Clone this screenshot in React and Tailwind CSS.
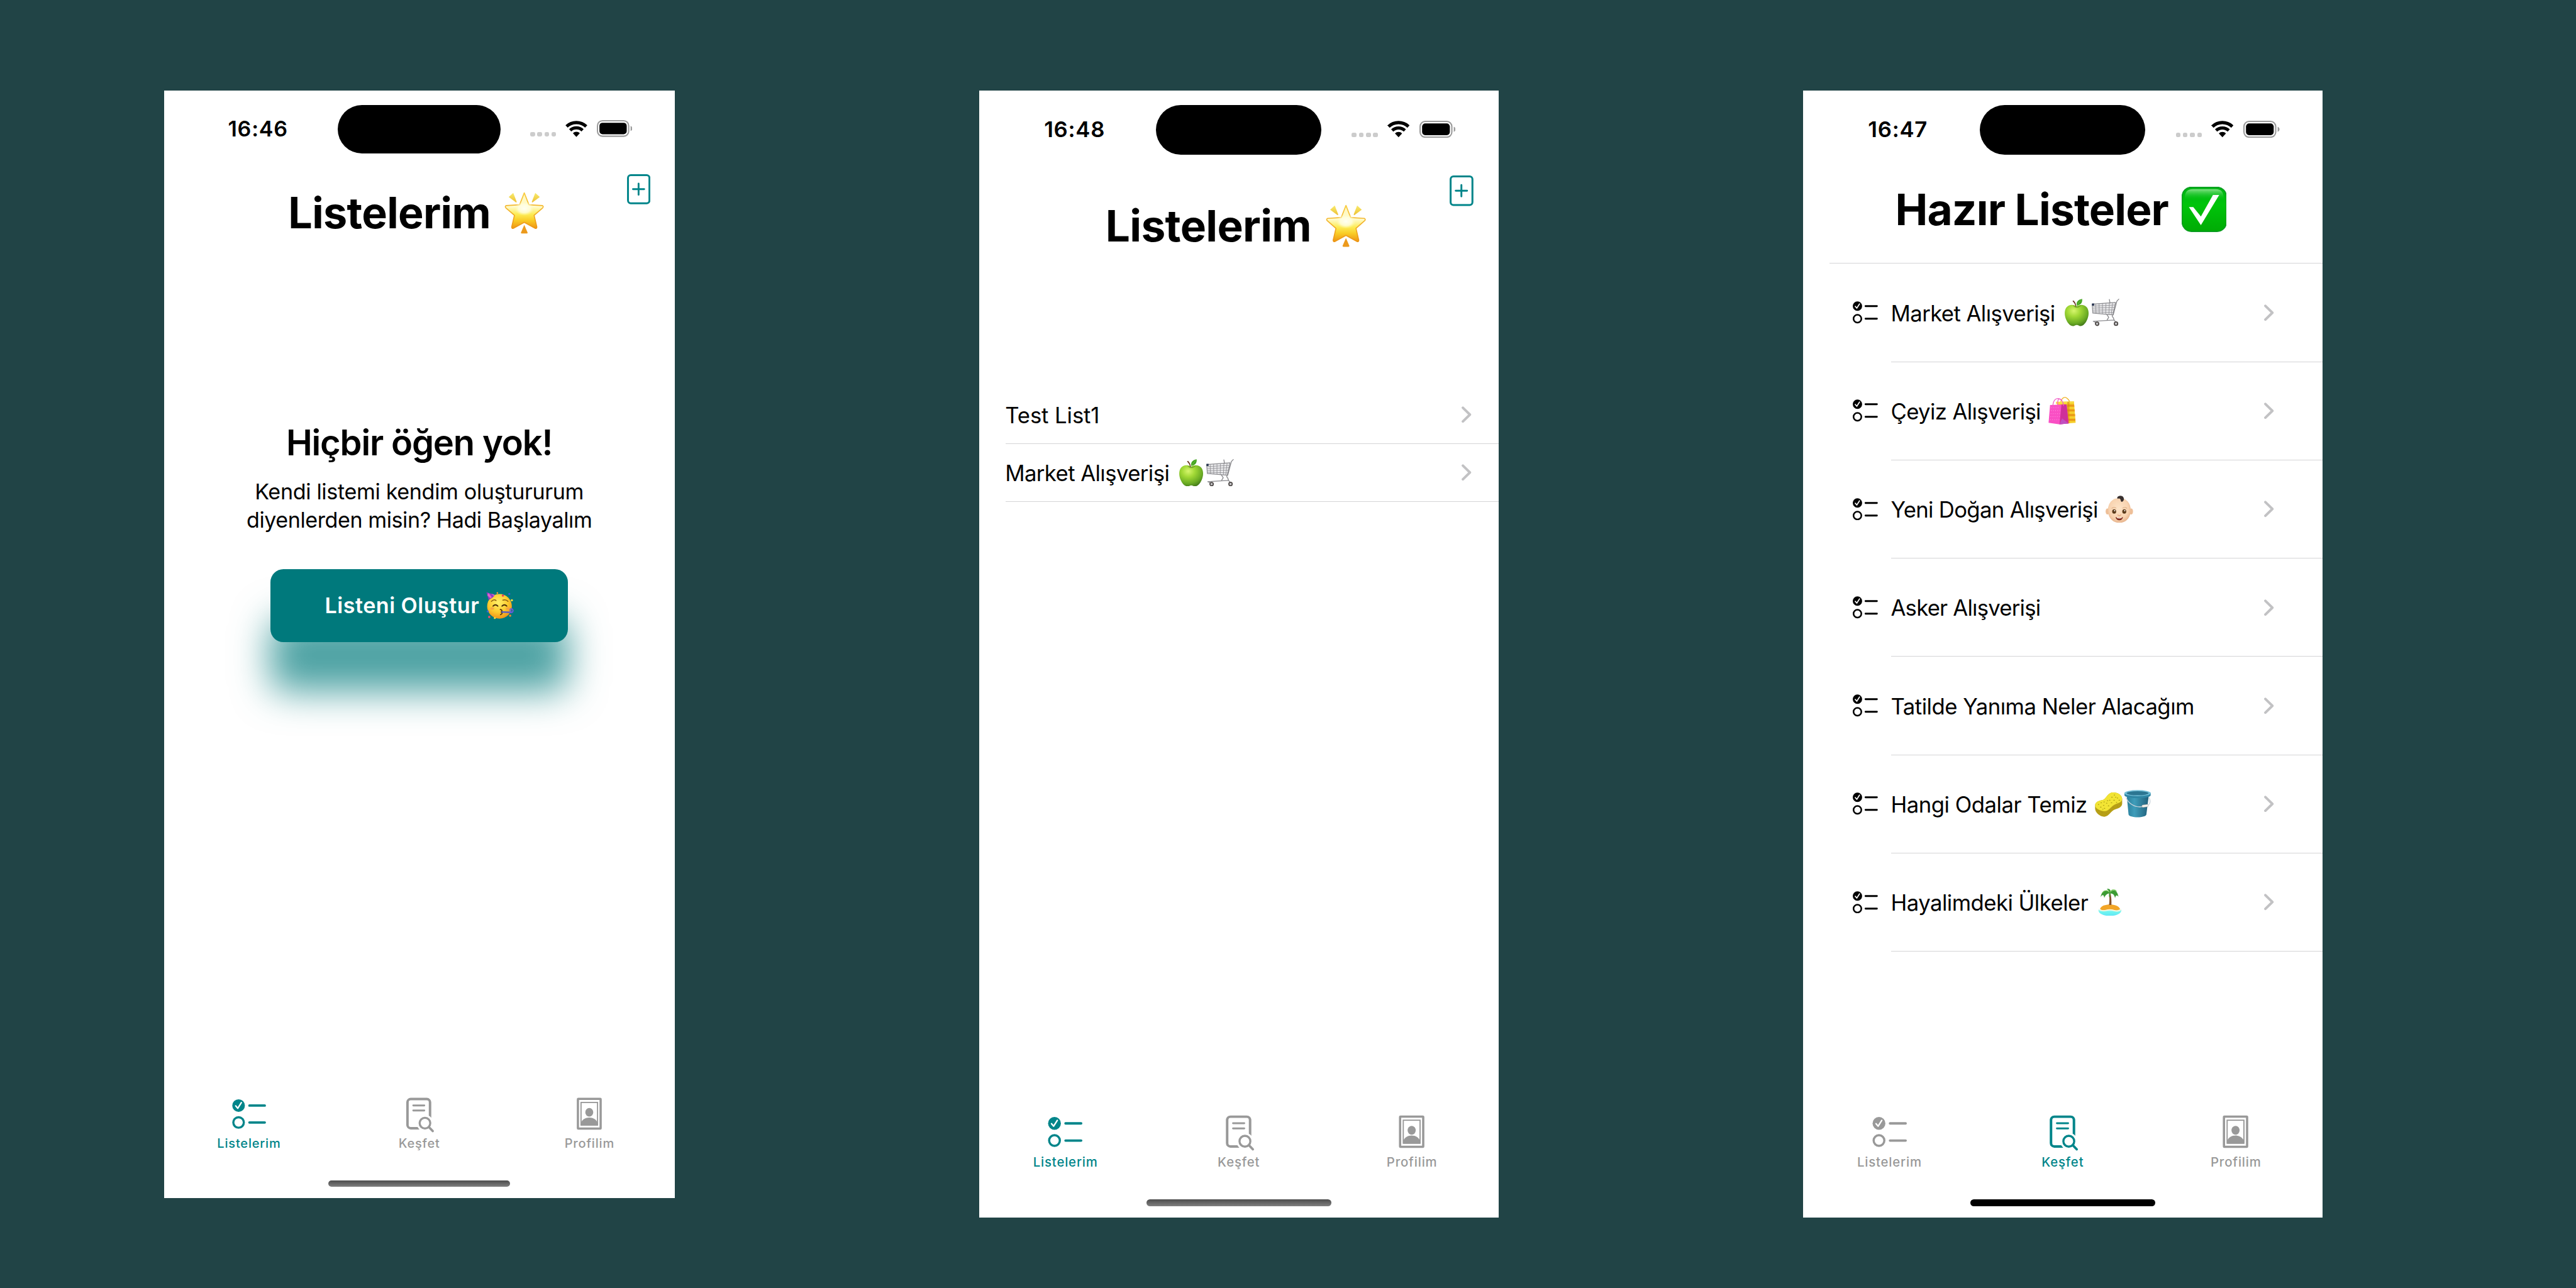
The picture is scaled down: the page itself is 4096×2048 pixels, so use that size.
import React from "react";

const TEAL = "text-[#00858A]";
const GRAY = "text-[#999999]";

/* ---------- status bar ---------- */

function Wifi() {
  return (
    <svg className="w-[16.9px] h-[12.6px]" viewBox="0 0 16.9 12.6" fill="none">
      <clipPath id="wifi-cone">
        <path d="M8.45 12.5L-3.2 0V-2H20.1V0Z" />
      </clipPath>
      <g clipPath="url(#wifi-cone)" stroke="#000">
        <circle cx="8.45" cy="12.4" r="11" strokeWidth="2.5" />
        <circle cx="8.45" cy="12.4" r="6.95" strokeWidth="2.4" />
        <circle cx="8.45" cy="12.4" r="1.95" strokeWidth="3.9" />
      </g>
    </svg>
  );
}

function Battery() {
  return (
    <svg className="w-[27.4px] h-[12.9px]" viewBox="0 0 27.4 12.9" fill="none">
      <rect x="0.5" y="0.5" width="24" height="11.9" rx="3.8" stroke="#9b9b9b" />
      <rect x="2" y="2" width="21" height="8.9" rx="2.4" fill="#000" />
      <path d="M26 4.5C26.9 4.9 27.4 5.6 27.4 6.45S26.9 8 26 8.4Z" fill="#9b9b9b" />
    </svg>
  );
}

function StatusBar({ time }) {
  return (
    <div className="flex h-[59px] items-start">
      <div className="w-[133.9px] pl-[49.3px] pt-[18.3px] text-[16.5px] leading-[22px] font-semibold tracking-[0.36px]">
        {time}
      </div>
      <div className="mt-[11.1px] h-[37.2px] w-[125.2px] rounded-full bg-black" />
      <div className="ml-[22.9px] mt-[22.7px] flex h-[12.9px] items-end">
        <div className="flex gap-[1.9px] pb-[0.3px]">
          <div className="h-[3.4px] w-[3.5px] rounded-[1.2px] bg-[#cccccc]" />
          <div className="h-[3.4px] w-[3.5px] rounded-[1.2px] bg-[#cccccc]" />
          <div className="h-[3.4px] w-[3.5px] rounded-[1.2px] bg-[#cccccc]" />
          <div className="h-[3.4px] w-[3.5px] rounded-[1.2px] bg-[#cccccc]" />
        </div>
        <div className="ml-[7.1px]">
          <Wifi />
        </div>
        <div className="ml-[7.4px]">
          <Battery />
        </div>
      </div>
    </div>
  );
}

/* ---------- icons ---------- */

function ChecklistShapes() {
  return (
    <>
      <circle cx="9.85" cy="8.2" r="4.85" fill="currentColor" />
      <path d="M7.6 8.4L9.2 10.3L12 5.9" stroke="#fff" strokeWidth="1.1" strokeLinecap="round" strokeLinejoin="round" />
      <circle cx="9.85" cy="21.2" r="4.05" stroke="currentColor" strokeWidth="1.65" />
      <path d="M18.2 8.2H30M18.2 21.2H30" stroke="currentColor" strokeWidth="1.85" strokeLinecap="round" />
    </>
  );
}

function TabChecklist() {
  return (
    <svg className="h-[30px] w-[36px]" viewBox="0 0 36 30" fill="none">
      <ChecklistShapes />
    </svg>
  );
}

function RowChecklist() {
  return (
    <svg className="h-[16.9px] w-[19px]" viewBox="5 3.2 26 23" fill="none">
      <ChecklistShapes />
    </svg>
  );
}

function TabExplore() {
  return (
    <svg className="h-[30px] w-[36px]" viewBox="0 0 36 30" fill="none" stroke="currentColor">
      <rect x="9.15" y="3.15" width="17.35" height="22.5" rx="2.5" strokeWidth="1.9" />
      <path d="M13.6 8.1H22.1M13.6 12H22.1" strokeWidth="1.4" strokeLinecap="round" />
      <circle cx="22.6" cy="21.7" r="6.4" fill="#fff" stroke="none" />
      <circle cx="22.6" cy="21.7" r="4.1" strokeWidth="1.6" />
      <path d="M25.7 24.8L28.6 27.8" strokeWidth="1.8" strokeLinecap="round" />
    </svg>
  );
}

function TabProfile() {
  return (
    <svg className="h-[30px] w-[36px]" viewBox="0 0 36 30" fill="none" stroke="currentColor">
      <rect x="9.15" y="3.05" width="17.5" height="22.9" rx="0.3" strokeWidth="1.7" />
      <rect x="11.55" y="5.8" width="12.7" height="17.4" strokeWidth="0.9" />
      <ellipse cx="17.9" cy="13.4" rx="3.05" ry="3.35" fill="currentColor" stroke="none" />
      <path d="M11.6 23.5V21.4C12.4 18.9 15 17.4 17.9 17.4S23.4 18.9 24.2 21.4V23.5Z" fill="currentColor" stroke="none" />
    </svg>
  );
}

function AddDocument() {
  return (
    <svg className={"h-[23.2px] w-[18px] " + TEAL} viewBox="0 0 18 23.2" fill="none" stroke="currentColor">
      <rect x="0.75" y="0.75" width="16.5" height="21.6" rx="2.1" strokeWidth="1.45" />
      <path d="M4.6 11.5H13.2M8.9 7.2V15.8" strokeWidth="1.4" strokeLinecap="round" />
    </svg>
  );
}

function Chevron() {
  return (
    <svg className="h-[12.6px] w-[7.6px]" viewBox="0 0 7.6 12.6" fill="none">
      <path d="M1 1.1L6.3 6.3L1 11.5" stroke="#c2c2c4" strokeWidth="1.9" strokeLinecap="round" strokeLinejoin="round" />
    </svg>
  );
}

/* ---------- emoji drawings ---------- */

const SMALL = "h-[20.8px] w-[20.8px]";

function GlowingStar() {
  return (
    <svg role="img" aria-label="🌟" className="h-[32.5px] w-[30.6px]" viewBox="-0.4 -0.4 61.2 65.2">
      <defs>
        <linearGradient id="star-body" x1="0" y1="0" x2="0" y2="1">
          <stop offset="0" stopColor="#fff7b8" />
          <stop offset="0.38" stopColor="#fffbcf" />
          <stop offset="0.6" stopColor="#fdec55" />
          <stop offset="0.78" stopColor="#f9cb25" />
          <stop offset="1" stopColor="#ee9414" />
        </linearGradient>
        <linearGradient id="star-edge" x1="0" y1="0" x2="0" y2="1">
          <stop offset="0" stopColor="#f8cc40" />
          <stop offset="1" stopColor="#ec9615" />
        </linearGradient>
        <radialGradient id="star-glow" cx="0.5" cy="0.44" r="0.42">
          <stop offset="0" stopColor="#fffff2" />
          <stop offset="0.6" stopColor="#fffee0" stopOpacity="0.8" />
          <stop offset="1" stopColor="#fff9b0" stopOpacity="0" />
        </radialGradient>
        <linearGradient id="star-ray" x1="0" y1="0" x2="0" y2="1">
          <stop offset="0" stopColor="#f8ec6e" />
          <stop offset="1" stopColor="#eec034" />
        </linearGradient>
      </defs>
      <path d="M13.2 1.2L6.2 7.6L17.6 16Q18.6 16 18.4 14.6Z" fill="url(#star-ray)" />
      <path d="M47.2 1.2L54.2 7.6L42.8 16Q41.8 16 42 14.6Z" fill="url(#star-ray)" />
      <path d="M30.2 50.6L35.4 62.6Q35.4 64 34 64H26.4Q25 64 25 62.6Z" fill="#ec9a1c" />
      <path d="M30.2 1.2L37.4 19.6L58 20.8Q60.6 22 58.6 24.4L45.4 36L49.6 54Q49.4 57 46.6 55.6L30.2 46.6L13.8 55.6Q11 57 10.8 54L15 36L1.8 24.4Q-0.2 22 2.4 20.8L23 19.6Z" fill="url(#star-body)" stroke="url(#star-edge)" strokeWidth="1.6" strokeLinejoin="round" />
      <ellipse cx="30.2" cy="27" rx="18" ry="13" fill="url(#star-glow)" />
    </svg>
  );
}

function CheckMark() {
  return (
    <svg role="img" aria-label="✅" className="h-[34.1px] w-[34.1px]" viewBox="0 0 68 68">
      <defs>
        <linearGradient id="check-box" x1="0" y1="0" x2="0" y2="1">
          <stop offset="0" stopColor="#00b414" />
          <stop offset="0.4" stopColor="#00c40a" />
          <stop offset="1" stopColor="#00ab05" />
        </linearGradient>
        <linearGradient id="check-shine" x1="0" y1="0" x2="0" y2="1">
          <stop offset="0" stopColor="#9be89a" />
          <stop offset="1" stopColor="#00c412" stopOpacity="0" />
        </linearGradient>
      </defs>
      <rect x="0.6" y="0.6" width="66.8" height="66.8" rx="14" fill="url(#check-box)" stroke="#0a9b22" strokeWidth="1.6" />
      <path d="M4.5 19C4.5 8 8 3.6 17 3.6H51C60 3.6 63.5 8 63.5 19Q34 22 4.5 19Z" fill="url(#check-shine)" opacity="0.85" />
      <path d="M10.9 30.7H17.5L29 44.8L47.2 12.4H56.6L29 57.9Z" fill="#fff" />
    </svg>
  );
}

function PartyFace() {
  return (
    <svg role="img" aria-label="🥳" className="h-[21px] w-[21.2px]" viewBox="0 0 64 64">
      <defs>
        <radialGradient id="party-face" cx="0.45" cy="0.35" r="0.65">
          <stop offset="0" stopColor="#fff06a" />
          <stop offset="0.6" stopColor="#fccb2e" />
          <stop offset="1" stopColor="#f0931a" />
        </radialGradient>
      </defs>
      <circle cx="31" cy="34" r="29" fill="url(#party-face)" />
      <path d="M0.5 1L20 7Q17 14 5.5 19Z" fill="#8a3fc4" />
      <path d="M5 2.4L13 12.5L9.6 15.5L2.6 8ZM12 4.5L17.5 10L19.6 7Z" fill="#e065c8" />
      <path d="M12 22.5Q18 16.5 23 20.5M39 19.5Q46 17 51 22.5" stroke="#8a5a10" strokeWidth="2.2" fill="none" strokeLinecap="round" />
      <path d="M16 33.5Q21.5 27.5 27 33.5M37 33.5Q42.5 27.5 48 33.5" stroke="#4a2c0a" strokeWidth="2.8" fill="none" strokeLinecap="round" />
      <ellipse cx="14" cy="39" rx="4.5" ry="3" fill="#f39a4a" opacity="0.7" />
      <ellipse cx="50" cy="39" rx="4.5" ry="3" fill="#f39a4a" opacity="0.7" />
      <path d="M33 41.5Q39.5 43 35 47.5Q40 50.5 33.5 53.5" stroke="#5c330b" strokeWidth="2.6" fill="none" strokeLinecap="round" strokeLinejoin="round" />
      <path d="M37 47.5L57 48" stroke="#4c55cf" strokeWidth="3.4" strokeLinecap="round" />
      <path d="M56 48.5Q63.5 49 62.5 43Q61 38.5 57 40.5Q54.5 43 57.5 45.5" stroke="#6a5bd8" strokeWidth="3" fill="none" strokeLinecap="round" />
      <circle cx="39" cy="9" r="2.6" fill="#e6395b" />
      <circle cx="54" cy="5" r="2.4" fill="#3b5bd8" />
      <circle cx="26" cy="2.8" r="2" fill="#f2a33a" />
      <circle cx="60" cy="20" r="2.6" fill="#f5dc3a" />
      <circle cx="3.5" cy="46" r="2.4" fill="#3b66d8" />
      <circle cx="7" cy="59" r="2.8" fill="#e64a6b" />
      <circle cx="20" cy="61.5" r="2.4" fill="#f5dc3a" />
      <circle cx="56" cy="56" r="2.6" fill="#ee8a2a" />
    </svg>
  );
}

function GreenApple() {
  return (
    <svg role="img" aria-label="🍏" className={SMALL} viewBox="0 0 64 64">
      <defs>
        <radialGradient id="apple-body" cx="0.38" cy="0.28" r="0.78">
          <stop offset="0" stopColor="#d6f56e" />
          <stop offset="0.35" stopColor="#a2d936" />
          <stop offset="0.75" stopColor="#6aab23" />
          <stop offset="1" stopColor="#41761a" />
        </radialGradient>
      </defs>
      <path d="M32 17.5C40 12.5 50 13 56 20C61.5 27.5 61 39 56.5 49C52.5 58 47 63.5 41 63.5C37.5 63.5 36 61 32.5 61S27.5 63.5 24 63.5C17.500 63.500 12 58 8 49C3.500 39 3 27.500 8.500 20C14.500 13 24 12.500 32 17.500Z" fill="url(#apple-body)" />
      <path d="M23 14.5Q32 20.500 44 14.500Q38 21 32.500 21T23 14.500Z" fill="#4c8418" opacity="0.55" />
      <path d="M31.500 18Q30.500 9 25 4L22.500 5.500Q28.500 11 29.500 18Z" fill="#6b3420" />
      <path d="M32.500 16C30.500 7.500 36 2 45 0.500C46 8.500 42 14.500 32.500 16Z" fill="#43a322" />
      <path d="M33.500 15Q38 7 44 2" stroke="#7fd04a" strokeWidth="1" fill="none" />
    </svg>
  );
}

function ShoppingCart() {
  return (
    <svg role="img" aria-label="🛒" className={SMALL} viewBox="0 0 64 64" fill="none">
      <path d="M1 12.600L55.500 8.600L49 37.500L2.500 33.500Z" fill="#ececee" stroke="#8b8b8f" strokeWidth="1.700" strokeLinejoin="round" />
      <path d="M1.500 17.500L54.500 14.500M1.700 22L53.500 20M2 26.500L52 26M2.200 30.500L50.500 32M9 12.500L10 34M17 12L17.500 34.500M25 11.500V35M33 11L32.500 35.700M41 10L40 36.500M48.500 9.500L45.500 37" stroke="#8f8f94" strokeWidth="1.300" />
      <path d="M63 1L58.500 5.500L50 37.500M41 1.500L42.500 10" stroke="#828286" strokeWidth="1.800" strokeLinecap="round" />
      <path d="M35 36.500L39.500 43.500L36 49M49 37.500Q46 41 50 44L52 49.500L3.500 52.500L12 56M52 49.500L56.500 55" stroke="#8b8b8f" strokeWidth="2" strokeLinejoin="round" strokeLinecap="round" />
      <rect x="0.500" y="11" width="5" height="5" fill="#25324f" />
      <circle cx="12.500" cy="58.300" r="3.900" fill="#c9c9cc" stroke="#4f4a48" strokeWidth="2.600" />
      <circle cx="56.500" cy="58" r="3.900" fill="#c9c9cc" stroke="#4f4a48" strokeWidth="2.600" />
    </svg>
  );
}

function ShoppingBags() {
  return (
    <svg role="img" aria-label="🛍️" className={SMALL} viewBox="0 0 64 64" fill="none">
      <path d="M29 12C31 2 38 -1 43 3Q48 6 50 12" stroke="#f0b429" strokeWidth="2" />
      <path d="M18 12L59.500 10.500L63.500 60.500L44 62Z" fill="#f6cf2c" />
      <path d="M44 18H60L60.500 23H44ZM44 29H61L61.500 34H44ZM44 40H62L62.300 45H44ZM44 51H62.800L63 56H44Z" fill="#ea9a17" />
      <path d="M18 11.500L59.500 10.500L60 14L18 17Z" fill="#f8dd44" />
      <path d="M44 12L49 11V62H44Z" fill="#d3860f" opacity="0.550" />
      <path d="M4 19L42.500 17.500L47 62L26 64L0.500 60.500Z" fill="#f94fc4" />
      <path d="M30.500 18L42.500 17.500L47 62L26 64Z" fill="#cf2f9a" />
      <path d="M32 50L47 62L26 64Z" fill="#c04fc0" />
      <path d="M7 25H27M6 32H27M5.500 39H27M5 46H26M4 53H26" stroke="#ff93df" strokeWidth="1.500" strokeDasharray="1.500 3.500" />
      <path d="M10.500 22C11 8 17 3.500 23 4Q34 5 35.500 21M22 20Q20.500 8 25 4.500" stroke="#f15fc6" strokeWidth="1.900" />
    </svg>
  );
}

function Baby() {
  return (
    <svg role="img" aria-label="👶🏻" className={SMALL} viewBox="0 0 64 64">
      <defs>
        <radialGradient id="baby-face" cx="0.48" cy="0.42" r="0.6">
          <stop offset="0" stopColor="#fde4c8" />
          <stop offset="0.7" stopColor="#f8d3b0" />
          <stop offset="1" stopColor="#e5b088" />
        </radialGradient>
      </defs>
      <ellipse cx="4.500" cy="37" rx="4.300" ry="7" fill="#eebf98" />
      <ellipse cx="59.500" cy="37" rx="4.300" ry="7" fill="#eebf98" />
      <path d="M32 6C48 6 58.500 17 58.500 34C58.500 52 47 63.500 32 63.500S5.500 52 5.500 34C5.500 17 16 6 32 6Z" fill="url(#baby-face)" />
      <path d="M27 4.500C30 -0.500 38 -1 41.500 4C44 8.500 42 13.500 38 14.500C34.500 14 36 9.500 33.500 7.500Q31 5.500 28 7.500Z" fill="#38302f" />
      <path d="M14.500 29.500Q19 26 24 29M40 29Q45 26 49.500 29.500" stroke="#e0b48c" strokeWidth="1.800" fill="none" strokeLinecap="round" />
      <ellipse cx="20" cy="37" rx="4.600" ry="5.200" fill="#5a3a1a" />
      <ellipse cx="43.500" cy="37" rx="4.600" ry="5.200" fill="#5a3a1a" />
      <circle cx="21" cy="35" r="1.500" fill="#fff" />
      <circle cx="44.500" cy="35" r="1.500" fill="#fff" />
      <path d="M28.500 45Q32 48.500 35.500 45" stroke="#e3a680" strokeWidth="2" fill="none" strokeLinecap="round" />
      <path d="M23 50Q32 52.500 40.500 50Q39 57.500 32 57.500T23 50Z" fill="#7c2618" />
      <path d="M26 51Q32 52.500 38 51L37 52.800Q32 54 27 52.800Z" fill="#fff" />
    </svg>
  );
}

function Sponge() {
  return (
    <svg role="img" aria-label="🧽" className={SMALL} viewBox="0 0 64 64">
      <path d="M0.500 36C0.500 28 10 25 18 23.500C26 22 28 9 40 6C50 4.500 63 10 63.500 21V32C63 40 56 43 47 45.500C38 48 33 62 22 62.500C11 62 1 53 0.500 44Z" fill="#b79f16" />
      <path d="M0.500 36C0.500 28 10 25 18 23.500C26 22 28 9 40 6C50 4.500 63 10 63.500 21C63 29 54 31 47 33.500C38 37 33 50 22 49.500C11 49 1 43 0.500 36Z" fill="#f2e434" />
      <path d="M8 34h1M14 30h1.500M20 36h1M13 40h1.500M22 43h1M27 31h1M31 37h1.500M34 24h1M39 17h1.500M45 12h1M44 24h1.500M52 19h1M56 24h1.500M50 29h1M38 30h1.500M29 25h1M48 17h1M8 48h1M16 53h1.500M26 55h1M34 47h1.500M42 40h1M52 38h1.500M58 33h1M21 28h1M18 45h1" stroke="#a89a12" strokeWidth="1.800" strokeLinecap="round" />
    </svg>
  );
}

function Bucket() {
  return (
    <svg role="img" aria-label="🪣" className={SMALL} viewBox="0 0 64 64" fill="none">
      <defs>
        <linearGradient id="bucket-side" x1="0" y1="0" x2="1" y2="0">
          <stop offset="0" stopColor="#2b7f9c" />
          <stop offset="0.35" stopColor="#3f9dba" />
          <stop offset="1" stopColor="#205f7a" />
        </linearGradient>
      </defs>
      <path d="M6.500 10L11 57C11.500 61.500 22 63.500 32 63.500S52 61.500 52.500 57L58.500 10Z" fill="url(#bucket-side)" />
      <path d="M1.500 6.500V13C6 18 20 19 32 19S58 18 62.500 13V6.500Z" fill="#2f86a4" />
      <ellipse cx="32" cy="7.500" rx="30.500" ry="7" fill="#74bfd8" />
      <ellipse cx="32" cy="7.800" rx="25.500" ry="4.800" fill="#2c7692" />
      <path d="M5 17C9 30 25 42 43 39M58 17C63 25 62 33 55 36.500" stroke="#c9d3da" strokeWidth="1.900" />
      <rect x="42" y="34.500" width="15" height="5.600" rx="2.500" transform="rotate(-8 49 37)" fill="#f4f1ec" stroke="#a9a49b" strokeWidth="0.700" />
    </svg>
  );
}

function Island() {
  return (
    <svg role="img" aria-label="🏝️" className={SMALL} viewBox="0 0 64 64">
      <defs>
        <linearGradient id="island-sea" x1="0" y1="0" x2="0" y2="1">
          <stop offset="0" stopColor="#dff7ec" />
          <stop offset="0.45" stopColor="#6ff5f0" />
          <stop offset="1" stopColor="#62e6f5" />
        </linearGradient>
      </defs>
      <path d="M5 49Q32 44 59 49C59 58 47 63.500 32 63.500S5 58 5 49Z" fill="url(#island-sea)" />
      <path d="M9 47C12 40 21 37 32 37S53 40 56 48Q48 52 40 49.500T22 49.500T9 47Z" fill="#f2a527" />
      <path d="M8 49Q16 53 24 50.500T42 51T57 49" stroke="#fff6dc" strokeWidth="2.600" fill="none" />
      <path d="M30 38C31.500 28 31 18 30 11L33.500 10.500C35.500 20 36 30 35.500 38Z" fill="#87542d" />
      <path d="M31 9C24 1 14 2 10 20C15 13 18 13.500 19 22C21 15 25 12 31 11C30 14 29.500 17 30.500 20C33 17 33.500 13 33 11C40 11.500 42.500 15 44 22C46 15 48 14 52 19C49 3 40 1 33 8C35 3 30 -1 25 1C28 3 30 6 31 9Z" fill="#3c9b34" />
      <path d="M33 8C37 1 43 1.500 47 6M30 8C25 3 19 4 15 9" stroke="#72c653" strokeWidth="1.800" fill="none" strokeLinecap="round" />
    </svg>
  );
}

/* ---------- shared parts ---------- */

const TABS = [
  { id: "lists", label: "Listelerim", Icon: TabChecklist },
  { id: "explore", label: "Keşfet", Icon: TabExplore },
  { id: "profile", label: "Profilim", Icon: TabProfile },
];

function TabBar({ active, indicator }) {
  return (
    <div className="mt-auto flex h-[79px] flex-col items-center">
      <div className="flex w-full">
        {TABS.map(({ id, label, Icon }) => (
          <div key={id} className={"flex flex-1 flex-col items-center " + (id === active ? TEAL : GRAY)}>
            <Icon />
            <div className="mt-[1.4px] text-[9.7px] leading-[12px] font-medium tracking-[0.39px]">{label}</div>
          </div>
        ))}
      </div>
      <div className={"mt-[22.1px] h-[5.2px] w-[140px] rounded-full " + indicator} />
    </div>
  );
}

const FADED = "bg-linear-to-b from-[#4d4d4d] to-[#808080]";

function ListsHeader({ offset }) {
  return (
    <div className="flex h-[70px] items-start">
      <div className={"flex w-[356.2px] items-start pl-[95.7px] " + offset}>
        <h1 className="text-[33px] leading-[41px] font-bold tracking-[-0.32px]">Listelerim</h1>
        <div className="ml-[10.8px] mt-[4.4px]">
          <GlowingStar />
        </div>
      </div>
      <div className="mt-[5.2px]">
        <AddDocument />
      </div>
    </div>
  );
}

function Emojis({ items }) {
  return (
    <div className="ml-[5.9px] flex gap-[1.2px]">
      {items.map((Item, i) => (
        <Item key={i} />
      ))}
    </div>
  );
}

const Line = ({ inset }) => <div className={"h-[0.48px] bg-[#d4d4d6] " + inset} />;

/* ---------- screens ---------- */

function EmptyScreen() {
  return (
    <div className="flex h-[852px] w-[393px] flex-col bg-white [zoom:2.0665]">
      <StatusBar time="16:46" />
      <ListsHeader offset="pt-[14.5px]" />
      <div className="mt-[125.3px] flex flex-col items-center text-center">
        <h2 className="text-[27.15px] leading-[34px] font-semibold tracking-[-0.57px]">Hiçbir öğen yok!</h2>
        <div className="mt-[9.3px] text-[16.5px] leading-[22px]">
          <div className="tracking-[-0.16px]">Kendi listemi kendim oluştururum</div>
          <div className="tracking-[-0.206px]">diyenlerden misin? Hadi Başlayalım</div>
        </div>
        <button className="mt-[26.7px] flex h-[56.1px] w-[228.7px] items-center justify-center rounded-[10px] bg-[#00797C] shadow-[0_38px_29px_rgba(0,122,124,0.7)]">
          <span className="text-[16.5px] leading-[22px] font-semibold tracking-[0.24px] text-white">Listeni Oluştur</span>
          <span className="ml-[5.2px]">
            <PartyFace />
          </span>
        </button>
      </div>
      <TabBar active="lists" indicator={FADED} />
    </div>
  );
}

const MY_LISTS = [
  { name: "Test List1", track: "tracking-[-0.04px]", emojis: [] },
  { name: "Market Alışverişi", track: "tracking-[-0.27px]", emojis: [GreenApple, ShoppingCart] },
];

function ListsScreen() {
  return (
    <div className="flex h-[852px] w-[393px] flex-col bg-white [zoom:2.1027]">
      <StatusBar time="16:48" />
      <ListsHeader offset="pt-[22.7px]" />
      <div className="mt-[94.2px]">
        {MY_LISTS.map((l) => (
          <div key={l.name}>
            <div className="flex h-[43.52px] items-center pl-[19.8px] pr-[20.2px]">
              <div className={"pt-[0.8px] text-[16.5px] leading-[22px] " + l.track}>{l.name}</div>
              <Emojis items={l.emojis} />
              <div className="ml-auto">
                <Chevron />
              </div>
            </div>
            <Line inset="ml-[20px]" />
          </div>
        ))}
      </div>
      <TabBar active="lists" indicator={FADED} />
    </div>
  );
}

const READY_LISTS = [
  { name: "Market Alışverişi", track: "tracking-[-0.27px]", emojis: [GreenApple, ShoppingCart] },
  { name: "Çeyiz Alışverişi", track: "tracking-[-0.3px]", emojis: [ShoppingBags] },
  { name: "Yeni Doğan Alışverişi", track: "tracking-[-0.32px]", emojis: [Baby] },
  { name: "Asker Alışverişi", track: "tracking-[-0.37px]", emojis: [] },
  { name: "Tatilde Yanıma Neler Alacağım", track: "tracking-[-0.24px]", emojis: [] },
  { name: "Hangi Odalar Temiz", track: "tracking-[-0.23px]", emojis: [Sponge, Bucket] },
  { name: "Hayalimdeki Ülkeler", track: "tracking-[-0.25px]", emojis: [Island] },
];

function ReadyScreen() {
  return (
    <div className="flex h-[852px] w-[393px] flex-col bg-white [zoom:2.1027]">
      <StatusBar time="16:47" />
      <div className="flex h-[71.5px] items-start pl-[69.8px] pt-[10.6px]">
        <h1 className="text-[33px] leading-[41px] font-bold tracking-[-0.41px]">Hazır Listeler</h1>
        <div className="ml-[9.8px] mt-[3.4px]">
          <CheckMark />
        </div>
      </div>
      <Line inset="ml-[20px]" />
      {READY_LISTS.map((l) => (
        <div key={l.name}>
          <div className="flex h-[73.84px] items-center pl-[37.8px] pr-[36.5px]">
            <RowChecklist />
            <div className={"ml-[9.7px] pt-[0.8px] text-[16.5px] leading-[22px] " + l.track}>{l.name}</div>
            <Emojis items={l.emojis} />
            <div className="ml-auto">
              <Chevron />
            </div>
          </div>
          <Line inset="ml-[66.7px]" />
        </div>
      ))}
      <TabBar active="explore" indicator="bg-black" />
    </div>
  );
}

export default function App() {
  return (
    <div className="flex h-[2048px] w-[4096px] items-start gap-[483.8px] overflow-hidden bg-[#214446] pl-[260.6px] pt-[144px] font-[Inter,sans-serif] text-black">
      <EmptyScreen />
      <ListsScreen />
      <ReadyScreen />
    </div>
  );
}
